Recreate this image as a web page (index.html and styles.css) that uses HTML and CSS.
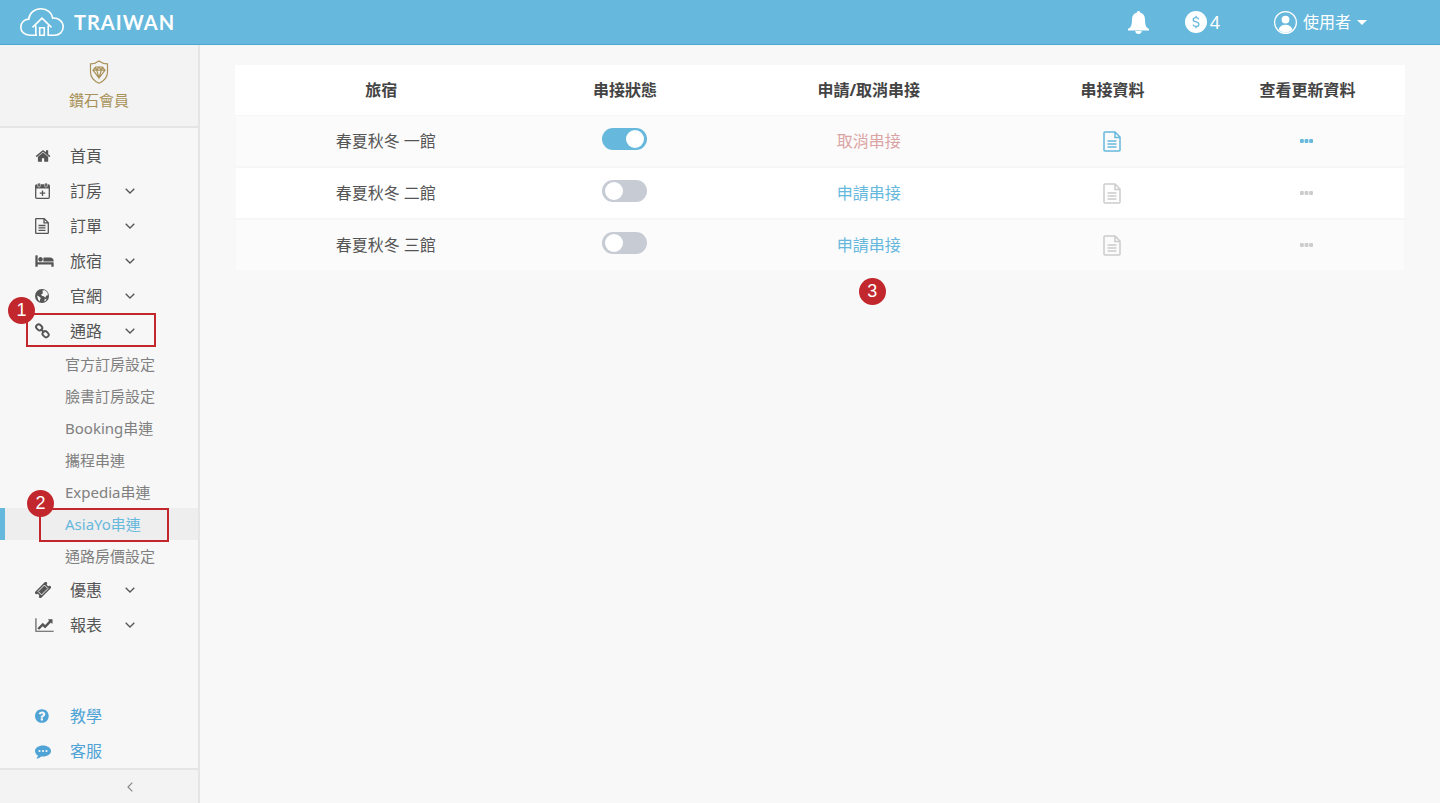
FILE: index.html
```html
<!DOCTYPE html>
<html lang="zh-Hant">
<head>
<meta charset="utf-8">
<title>TRAIWAN</title>
<link rel="stylesheet" href="styles.css">
</head>
<body>
<svg class="defs" aria-hidden="true">
  <symbol id="doc" viewBox="0 0 18 21">
    <path d="M1 2a1 1 0 0 1 1-1h10l5 5v13a1 1 0 0 1-1 1H2a1 1 0 0 1-1-1zM12 1v5.500h5M4.500 10h9M4.500 13h9M4.500 16h9" fill="none" stroke="currentColor" stroke-width="1.500"/>
  </symbol>
  <symbol id="down" viewBox="0 0 10 6">
    <path d="M.7.7 5 5 9.300.7" fill="none" stroke="currentColor" stroke-width="1.300"/>
  </symbol>
  <symbol id="dots" viewBox="0 0 13 4">
    <g fill="currentColor"><rect width="3.800" height="4" rx="1"/><rect x="4.600" width="3.800" height="4" rx="1"/><rect x="9.200" width="3.800" height="4" rx="1"/></g>
  </symbol>
</svg>

<header class="topbar">
  <a class="brand" href="#">
    <svg class="brand-mark" viewBox="0 0 44 28" aria-hidden="true">
      <g fill="none" stroke="#fff" stroke-width="1.600">
        <path d="M17 27.200H10C4.500 27.200.8 23.800.8 19.200c0-4.500 3.400-7.900 8-8.100C9.300 5 14.500.8 21 .8c6.600 0 11 4.200 11.700 9.300 6-.4 10.500 3.400 10.500 8.700 0 5-3.700 8.400-8.700 8.400H27.500"/>
        <path d="M12.500 19.300 22 10.200l9.500 9.100M15.800 17.500v9.700M28.200 17.500v9.700M19.700 27.200v-7.500h4.600v7.500z"/>
      </g>
    </svg>
    <span class="brand-name">TRAIWAN</span>
  </a>
  <div class="tools">
    <button class="tool bell" aria-label="通知">
      <svg width="21" height="23" viewBox="0 0 21 23" aria-hidden="true"><path d="M10.500 0c1 0 1.500.7 1.500 1.600 3.400.8 5 3.600 5 7 0 6 1.200 8 4 9.400v1.500H0V18c2.800-1.400 4-3.400 4-9.400 0-3.400 1.600-6.200 5-7C9 .7 9.500 0 10.500 0zM7.300 20h6.400c0 1.800-1.300 3-3.200 3s-3.200-1.200-3.200-3z" fill="#fff"/></svg>
    </button>
    <button class="tool points">
      <svg width="22" height="22" viewBox="0 0 22 22" aria-hidden="true"><circle cx="11" cy="11" r="11" fill="#fff"/><path d="M13.800 8.200c-.4-1-1.500-1.600-2.800-1.600-1.600 0-2.800.8-2.800 2.100 0 2.900 5.700 1.500 5.700 4.500 0 1.400-1.200 2.200-2.900 2.200-1.500 0-2.600-.7-3-1.800M11 4.800v1.800M11 15.400v1.800" fill="none" stroke="#66b8dc" stroke-width="1.300"/></svg>
      <span>4</span>
    </button>
    <button class="tool user">
      <svg width="23" height="23" viewBox="0 0 23 23" aria-hidden="true"><circle cx="11.500" cy="11.500" r="10.900" fill="none" stroke="#fff" stroke-width="1.200"/><circle cx="11.500" cy="8.600" r="3.900" fill="#fff"/><path d="M4.500 18.500c1-3 3.500-4.700 7-4.700s6 1.700 7 4.700c-1.800 2-4.200 3.200-7 3.200s-5.200-1.200-7-3.200z" fill="#fff"/></svg>
      <span>使用者</span>
      <svg width="10" height="5" viewBox="0 0 10 5" aria-hidden="true"><path d="M0 0h10L5 5z" fill="#fff"/></svg>
    </button>
  </div>
</header>

<div class="shell">
  <aside class="sidebar">
    <div class="member">
      <svg width="20" height="24" viewBox="0 0 20 24" aria-hidden="true"><g fill="none" stroke="#a99259" stroke-width="1.200"><path d="M10 1c2.500 2 5 2.800 8.500 2.800V12c0 5.500-3.500 9-8.500 11.200C5 21 1.500 17.500 1.500 12V3.800C5 3.800 7.500 3 10 1z"/><path d="M6.500 7h7l2.500 3.200-6 7.800-6-7.800zM4 10.200h12M6.500 7l1.200 3.200L10 18l2.300-7.800L13.500 7M7.700 10.200 10 7l2.300 3.200"/></g></svg>
      <span>鑽石會員</span>
    </div>

    <nav class="nav">
      <ul class="menu">
        <li><a class="item" href="#">
          <svg class="ico" viewBox="40 0 1700 1792" aria-hidden="true"><path fill="currentColor" d="M1472 992v480q0 26-19 45t-45 19h-384v-384h-256v384h-384q-26 0-45-19t-19-45v-480q0-1 .5-3t.5-3l575-474 575 474q1 2 1 6zm223-69l-62 74q-8 9-21 11h-3q-13 0-21-7l-692-577-692 577q-12 8-24 7-13-2-21-11l-62-74q-8-10-7-23.500t11-21.500l719-599q32-26 76-26t76 26l244 204v-195q0-14 9-23t23-9h192q14 0 23 9t9 23v408l219 182q10 8 11 21.500t-7 23.500z"/></svg>
          <span>首頁</span></a></li>
        <li><button class="item">
          <svg class="ico" viewBox="0 0 16 16" aria-hidden="true"><path d="M1.700 2h11.600a1 1 0 0 1 1 1v11.300a1 1 0 0 1-1 1H1.700a1 1 0 0 1-1-1V3a1 1 0 0 1 1-1z" fill="none" stroke="currentColor" stroke-width="1.300"/><path d="M.7 2h13.600v3.500H.7z" fill="currentColor"/><rect x="2.700" y="0" width="2.600" height="4" rx="1" fill="currentColor" stroke="#f7f7f7" stroke-width=".6"/><rect x="9.700" y="0" width="2.600" height="4" rx="1" fill="currentColor" stroke="#f7f7f7" stroke-width=".6"/><path d="M7.500 7.500v5.400M4.800 10.200h5.400" stroke="currentColor" stroke-width="1.300"/></svg>
          <span>訂房</span><svg class="down"><use href="#down"/></svg></button></li>
        <li><button class="item">
          <svg class="ico" viewBox="0 0 16 16" aria-hidden="true"><path d="M.7 1.200a.6.600 0 0 1 .6-.6h7.900l4.100 4.100v10a.6.600 0 0 1-.6.600H1.300a.6.600 0 0 1-.6-.6zM9 .7v4.200h4.300M3.500 7.500h7M3.500 9.900h7M3.500 12.300h7" fill="none" stroke="currentColor" stroke-width="1.300"/></svg>
          <span>訂單</span><svg class="down"><use href="#down"/></svg></button></li>
        <li><button class="item">
          <svg class="ico wide" viewBox="0 0 2048 1792" aria-hidden="true"><path fill="currentColor" d="M256 1024h1728q26 0 45 19t19 45v448h-256v-256h-1536v256h-256v-1216q0-26 19-45t45-19h128q26 0 45 19t19 45v704zm576-320q0-106-75-181t-181-75-181 75-75 181 75 181 181 75 181-75 75-181zm1216 256v-64q0-159-112.500-271.500t-271.500-112.500h-704q-26 0-45 19t-19 45v384h1152z"/></svg>
          <span>旅宿</span><svg class="down"><use href="#down"/></svg></button></li>
        <li><button class="item">
          <svg class="ico" viewBox="0 0 16 16" aria-hidden="true"><circle cx="7" cy="8" r="7" fill="currentColor"/><path d="M7.500 2.600 10 2.300l2.400 2.200.6 2.700-1.600.4-1.200 2.200-1.300-1.500-1.700-.2L6 6.600l1.800-1.200zM2 7.400l2 1 1.800 1.600-.8 1.800-.2 1.800-1.600-1.800zM9.600 11.500l1.900-1-.6 2-1.700 1z" fill="#f7f7f7"/></svg>
          <span>官網</span><svg class="down"><use href="#down"/></svg></button></li>
        <li class="marked">
          <button class="item" aria-expanded="true">
          <svg class="ico" viewBox="0 0 16 16" aria-hidden="true"><g fill="none" stroke="currentColor" stroke-width="1.900"><rect x="1" y="1.900" width="6.400" height="5" rx="2.300" transform="rotate(45 4.200 4.400)"/><rect x="7.400" y="8.700" width="6.400" height="5" rx="2.300" transform="rotate(45 10.600 11.200)"/><path d="m5.600 6 3.600 3.500"/></g></svg>
          <span>通路</span><svg class="down"><use href="#down"/></svg></button>
          <span class="frame frame-menu"><b class="step">1</b></span>
          <ul class="submenu">
            <li><a class="sub" href="#">官方訂房設定</a></li>
            <li><a class="sub" href="#">臉書訂房設定</a></li>
            <li><a class="sub" href="#">Booking串連</a></li>
            <li><a class="sub" href="#">攜程串連</a></li>
            <li><a class="sub" href="#">Expedia串連</a></li>
            <li class="marked"><a class="sub active" href="#" aria-current="page">AsiaYo串連</a><span class="frame frame-sub"><b class="step">2</b></span></li>
            <li><a class="sub" href="#">通路房價設定</a></li>
          </ul>
        </li>
        <li><button class="item">
          <svg class="ico" viewBox="0 0 16 16" aria-hidden="true"><g transform="rotate(-45 8 8)"><path d="M0 3.700h16v2.500a1.800 1.800 0 0 0 0 3.600v2.500H0V9.800a1.800 1.800 0 0 0 0-3.600z" fill="currentColor"/><path d="M3.500 5.500h9v5h-9z" fill="none" stroke="#f7f7f7" stroke-width=".9"/></g></svg>
          <span>優惠</span><svg class="down"><use href="#down"/></svg></button></li>
        <li><button class="item">
          <svg class="ico wide" viewBox="0 0 2048 1792" aria-hidden="true"><path fill="currentColor" d="M2048 1536v128h-2048v-1536h128v1408h1920zm-128-1248v435q0 21-19.500 29.500t-35.500-7.500l-121-121-633 633q-10 10-23 10t-23-10l-233-233-416 416-192-192 585-585q10-10 23-10t23 10l233 233 464-464-121-121q-16-16-7.500-35.500t29.500-19.500h435q14 0 23 9t9 23z"/></svg>
          <span>報表</span><svg class="down"><use href="#down"/></svg></button></li>
      </ul>
      <ul class="menu help">
        <li><a class="item" href="#">
          <svg class="ico" viewBox="128 0 1792 1792" aria-hidden="true"><path fill="currentColor" d="M1024 1376v-192q0-14-9-23t-23-9h-192q-14 0-23 9t-9 23v192q0 14 9 23t23 9h192q14 0 23-9t9-23zm256-672q0-88-55.500-163t-138.500-116-170-41q-243 0-371 213-15 24 8 42l132 100q7 6 19 6 16 0 25-12 53-68 86-92 34-24 86-24 48 0 85.500 26t37.500 59q0 38-20 61t-68 45q-63 28-115.500 86.500t-52.500 125.500v36q0 14 9 23t23 9h192q14 0 23-9t9-23q0-19 21.500-49.500t54.500-49.500q32-18 49-28.500t46-35 44.500-48 28-60.500 12.500-81zm384 192q0 209-103 385.500t-279.500 279.500-385.500 103-385.500-103-279.500-279.500-103-385.500 103-385.500 279.500-279.500 385.500-103 385.500 103 279.500 279.500 103 385.500z"/></svg>
          <span>教學</span></a></li>
        <li><a class="item" href="#">
          <svg class="ico" viewBox="0 0 16 16" aria-hidden="true"><path d="M8 2.500c4.400 0 8 2.400 8 5.500s-3.600 5.500-8 5.500c-.6 0-1.200 0-1.700-.1-1.300 1.200-3 2-5 2.100.9-.8 1.500-1.700 1.600-2.900C1.100 11.500 0 9.900 0 8c0-3.100 3.600-5.500 8-5.500z" fill="currentColor"/><g fill="#f7f7f7"><circle cx="4.500" cy="8" r="1.100"/><circle cx="8" cy="8" r="1.100"/><circle cx="11.500" cy="8" r="1.100"/></g></svg>
          <span>客服</span></a></li>
      </ul>
    </nav>

    <button class="collapse" aria-label="收合選單">
      <svg width="6" height="10" viewBox="0 0 6 10" aria-hidden="true"><path d="M5.300.7 1 5l4.300 4.300" fill="none" stroke="#888" stroke-width="1.200"/></svg>
    </button>
  </aside>

  <main class="content">
    <table class="grid">
      <colgroup><col class="c3"><col class="c2"><col class="c3"><col class="c2"><col class="c2"></colgroup>
      <thead>
        <tr><th>旅宿</th><th>串接狀態</th><th>申請/取消串接</th><th>串接資料</th><th>查看更新資料</th></tr>
      </thead>
      <tbody>
        <tr>
          <td class="name">春夏秋冬 一館</td>
          <td><input class="switch" type="checkbox" role="switch" aria-label="春夏秋冬 一館" checked></td>
          <td><a class="act cancel" href="#">取消串接</a></td>
          <td><button class="icon-btn on" aria-label="串接資料"><svg class="doc"><use href="#doc"/></svg></button></td>
          <td><button class="icon-btn on" aria-label="查看更新資料"><svg class="dots"><use href="#dots"/></svg></button></td>
        </tr>
        <tr>
          <td class="name">春夏秋冬 二館</td>
          <td><input class="switch" type="checkbox" role="switch" aria-label="春夏秋冬 二館"></td>
          <td><a class="act" href="#">申請串接</a></td>
          <td><button class="icon-btn" aria-label="串接資料"><svg class="doc"><use href="#doc"/></svg></button></td>
          <td><button class="icon-btn" aria-label="查看更新資料"><svg class="dots"><use href="#dots"/></svg></button></td>
        </tr>
        <tr>
          <td class="name">春夏秋冬 三館</td>
          <td><input class="switch" type="checkbox" role="switch" aria-label="春夏秋冬 三館"></td>
          <td class="marked"><a class="act" href="#">申請串接</a><b class="step step-table">3</b></td>
          <td><button class="icon-btn" aria-label="串接資料"><svg class="doc"><use href="#doc"/></svg></button></td>
          <td><button class="icon-btn" aria-label="查看更新資料"><svg class="dots"><use href="#dots"/></svg></button></td>
        </tr>
      </tbody>
    </table>
  </main>
</div>
</body>
</html>
```
FILE: styles.css
```css
* { box-sizing: border-box; }

body {
  margin: 0;
  min-height: 100vh;
  display: flex;
  flex-direction: column;
  background: #f8f8f8;
  color: #555;
  font-family: "Noto Sans", "Noto Sans CJK TC", sans-serif;
  font-size: 16px;
  line-height: 24px;
}

button {
  margin: 0;
  padding: 0;
  border: 0;
  background: none;
  color: inherit;
  font: inherit;
  cursor: pointer;
}

a { color: inherit; text-decoration: none; }
ul { margin: 0; padding: 0; list-style: none; }
svg { display: block; flex: none; }
.defs { position: absolute; width: 0; height: 0; }

/* Top bar */
.topbar {
  display: flex;
  align-items: center;
  justify-content: space-between;
  height: 45px;
  padding: 0 73px 0 20px;
  background: #66b8dc;
  border-bottom: 1px solid #4ba6d1;
  color: #fff;
}
.brand { display: flex; align-items: center; gap: 10px; }
.brand-mark { width: 44px; height: 28px; }
.brand-name { font: 700 20px/24px Lato, sans-serif; letter-spacing: 1px; }
.tools { display: flex; align-items: center; }
.tool { display: flex; align-items: center; }
.bell { margin-right: 36px; }
.points { gap: 3px; margin-right: 54px; font-size: 18px; }
.user { gap: 6px; }

/* Sidebar */
.shell { flex: 1; display: flex; }
.sidebar {
  flex: none;
  display: flex;
  flex-direction: column;
  width: 200px;
  background: #f7f7f7;
  border-right: 2px solid #e5e5e5;
}
.member {
  display: flex;
  flex-direction: column;
  align-items: center;
  gap: 4px;
  padding: 15px 0 14px;
  background: #f3f3f3;
  border-bottom: 2px solid #e5e5e5;
  color: #a99259;
  font-size: 15px;
}
.nav { flex: 1; display: flex; flex-direction: column; padding-top: 10px; }
.item {
  display: flex;
  align-items: center;
  width: 100%;
  height: 35px;
  padding-left: 35px;
}
.item span { margin-left: 19px; }
.ico { width: 16px; height: 16px; }
.ico.wide { width: 19px; }
.ico.wide + span { margin-left: 16px; }
.down { width: 10px; height: 6px; margin-left: 23px; }
.help { margin-top: auto; color: #4fa3d5; }

.sub {
  display: flex;
  align-items: center;
  height: 32px;
  padding-left: 60px;
  border-left: 5px solid transparent;
  color: #808080;
  font-size: 15px;
}
.sub.active { background: #eee; border-left-color: #66b8dc; color: #66b8dc; }

.collapse {
  display: flex;
  align-items: center;
  height: 35px;
  padding-left: 127px;
  background: #f3f3f3;
  border-top: 2px solid #e5e5e5;
}

/* Step callouts */
.marked { position: relative; }
.frame {
  position: absolute;
  width: 130px;
  height: 34px;
  border: 2px solid #c1272d;
  pointer-events: none;
}
.frame-menu { top: 0; left: 26px; }
.frame-sub { top: 0; left: 39px; }
.step {
  position: absolute;
  width: 27px;
  height: 27px;
  border-radius: 50%;
  background: #c1272d;
  color: #fff;
  font: 400 18px/27px "Liberation Sans", sans-serif;
  text-align: center;
}
.frame-menu .step { top: -18px; left: -20px; }
.frame-sub .step { top: -20px; left: -14px; }
.step-table { bottom: -35px; left: calc(50% - 10px); }

/* Property table */
.content { flex: 1; padding: 20px 35px; }
.grid {
  width: 100%;
  table-layout: fixed;
  border-spacing: 0;
  text-align: center;
}
.c3 { width: 25%; }
.c2 { width: 16.67%; }
.grid th {
  height: 50px;
  padding: 0;
  background: #fff;
  color: #444;
  font-weight: 700;
}
.grid td {
  height: 52px;
  padding: 0;
  border-top: 2px solid #f6f6f6;
  background: #fff;
  vertical-align: middle;
}
.grid tbody tr:nth-child(odd) td { background: #fbfbfb; }
.grid tbody tr:first-child td { height: 51px; border-top-width: 1px; }
.grid td:first-child { border-left: 1px solid #f8f8f8; }
.grid td:last-child { border-right: 1px solid #f8f8f8; }
.grid .name { padding-left: 8px; }

.switch {
  appearance: none;
  display: block;
  width: 45px;
  height: 22px;
  margin: 0 auto 4px;
  padding: 2px 3px;
  border-radius: 11px;
  background: #c6cbd4;
  cursor: pointer;
}
.switch::before {
  content: "";
  display: block;
  width: 18px;
  height: 18px;
  border-radius: 50%;
  background: #fff;
}
.switch:checked { background: #66b8dc; }
.switch:checked::before { margin-left: auto; }

.act { color: #66b8dc; }
.act.cancel { color: #dba4a4; }
.icon-btn { display: block; margin: 0 auto; color: #ccc; }
.icon-btn.on { color: #66b8dc; }
.doc { width: 18px; height: 21px; }
.dots { width: 13px; height: 4px; }
```
